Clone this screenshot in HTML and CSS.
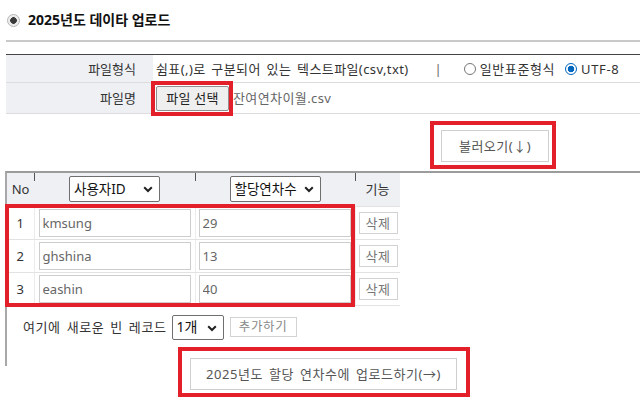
FILE: index.html
```html
<!DOCTYPE html>
<html lang="ko">
<head>
<meta charset="utf-8">
<title>2025년도 데이타 업로드</title>
<link rel="stylesheet" href="styles.css">
</head>
<body>
<div class="page">
  <h1 class="title"><span class="bullet"></span>2025년도 데이타 업로드</h1>
  <div class="rule-light"></div>

  <div class="form">
    <div class="form-row r1">
      <div class="form-label">파일형식</div>
      <div class="form-value">
        <span class="format-text">쉼표(,)로 구분되어 있는 텍스트파일(csv,txt)</span>
        <span class="sep">|</span>
        <span class="radio"></span><span class="radio-label">일반표준형식</span>
        <span class="radio on"></span><span class="radio-label">UTF-8</span>
      </div>
    </div>
    <div class="form-row r2">
      <div class="form-label">파일명</div>
      <div class="form-value">
        <button class="file-btn">파일 선택</button>
        <span class="file-name">잔여연차이월.csv</span>
      </div>
    </div>
  </div>

  <div class="load-row">
    <button class="btn load-btn">불러오기(↓)</button>
  </div>

  <div class="grid-section">
    <table class="grid">
      <colgroup>
        <col class="c-no"><col class="c-id"><col class="c-amt"><col class="c-fn">
      </colgroup>
      <thead>
        <tr>
          <th>No</th>
          <th class="tick">
            <span class="select sel-id">사용자ID<svg class="chev" viewBox="0 0 10 7" width="10" height="7"><path d="M1.2 1.2L5 5 8.8 1.2" fill="none" stroke="#222" stroke-width="2"/></svg></span>
          </th>
          <th class="tick">
            <span class="select sel-amt">할당연차수<svg class="chev" viewBox="0 0 10 7" width="10" height="7"><path d="M1.2 1.2L5 5 8.8 1.2" fill="none" stroke="#222" stroke-width="2"/></svg></span>
          </th>
          <th class="tick">기능</th>
        </tr>
      </thead>
      <tbody>
        <tr>
          <td class="num">1</td>
          <td class="cell-id"><input class="inp" value="kmsung"></td>
          <td class="cell-amt"><input class="inp" value="29"></td>
          <td class="cell-fn"><button class="del-btn">삭제</button></td>
        </tr>
        <tr>
          <td class="num">2</td>
          <td class="cell-id"><input class="inp" value="ghshina"></td>
          <td class="cell-amt"><input class="inp" value="13"></td>
          <td class="cell-fn"><button class="del-btn">삭제</button></td>
        </tr>
        <tr>
          <td class="num">3</td>
          <td class="cell-id"><input class="inp" value="eashin"></td>
          <td class="cell-amt"><input class="inp" value="40"></td>
          <td class="cell-fn"><button class="del-btn">삭제</button></td>
        </tr>
      </tbody>
    </table>

    <div class="add-row">
      <span class="add-text">여기에 새로운 빈 레코드</span>
      <span class="select sel-count">1개<svg class="chev" viewBox="0 0 10 7" width="10" height="7"><path d="M1.2 1.2L5 5 8.8 1.2" fill="none" stroke="#222" stroke-width="2"/></svg></span>
      <button class="add-btn">추가하기</button>
    </div>
  </div>

  <div class="upload-row">
    <button class="btn upload-btn">2025년도 할당 연차수에 업로드하기(→)</button>
  </div>

  <div class="mark mark-file"></div>
  <div class="mark mark-load"></div>
  <div class="mark mark-rows"></div>
  <div class="mark mark-upload"></div>
</div>
</body>
</html>
```

FILE: styles.css
```css
* { box-sizing: border-box; }

html, body {
  margin: 0;
  padding: 0;
  background: #fff;
}

body {
  width: 640px;
  height: 412px;
  overflow: hidden;
  font-family: "Noto Sans", "Noto Sans CJK KR", sans-serif;
  font-size: 13px;
  line-height: 18px;
  color: #333;
}

.page {
  position: relative;
  padding-left: 6px;
}

/* Title */
.title {
  margin: 0;
  height: 40px;
  display: flex;
  align-items: center;
  gap: 8px;
  padding-left: 1px;
  font-size: 14px;
  font-weight: 700;
  color: #111;
}

.bullet {
  width: 13px;
  height: 13px;
  border-radius: 50%;
  border: 1px solid #b5b5b5;
  background: radial-gradient(circle, #3a3a3a 0 3px, #e6e6e6 3.6px, #f6f6f6 6px);
  flex: none;
}

.rule-light {
  height: 2px;
  background: #c9c9c9;
  margin-bottom: 12px;
}

/* File form */
.form {
  border-top: 1px solid #444;
}

.form-row {
  display: grid;
  grid-template-columns: 147px 1fr;
  border-bottom: 1px solid #dcdcdc;
}

.form-row.r1 { height: 28px; }
.form-row.r2 { height: 31px; }

.form-label {
  background: #eef0f3;
  display: flex;
  align-items: center;
  justify-content: flex-end;
  padding-right: 17px;
  color: #333;
}

.form-value {
  display: flex;
  align-items: center;
  padding-left: 3px;
  color: #333;
}

.format-text {
  letter-spacing: 0.4px;
  word-spacing: 2px;
}

.sep {
  margin: 0 22px 0 26px;
  color: #666;
}

.radio {
  width: 12px;
  height: 12px;
  border-radius: 50%;
  border: 1px solid #777;
  background: #fff;
  flex: none;
}

.radio.on {
  border-color: #0067c0;
  background: radial-gradient(circle, #0067c0 0 3px, #fff 3.6px);
}

.radio-label {
  margin-left: 4px;
  margin-right: 10px;
  letter-spacing: 0.6px;
}

.file-btn {
  width: 73px;
  height: 25px;
  padding: 0;
  font: inherit;
  color: #222;
  background: #efefef;
  border: 1px solid #8f8f8f;
  border-radius: 2px;
  letter-spacing: 0.3px;
}

.file-name {
  margin-left: 4px;
  color: #666;
  letter-spacing: 0.4px;
}

/* Load button */
.load-row {
  height: 57px;
  padding-top: 16px;
  padding-left: 435px;
}

.btn {
  font: inherit;
  color: #555;
  background: #fff;
  border: 1px solid #cfcfcf;
  padding: 0;
}

.load-btn {
  width: 108px;
  height: 32px;
  letter-spacing: 0.5px;
}

/* Grid */
.grid-section {
  margin-left: -1px;
  height: 195px;
  border-top: 2px solid #9c9c9c;
  border-left: 2px solid #a8a8a8;
}

.grid {
  width: 393px;
  border-collapse: collapse;
  table-layout: fixed;
}

.c-no { width: 27px; }
.c-id { width: 161px; }
.c-amt { width: 160px; }
.c-fn { width: 45px; }

.grid th {
  position: relative;
  height: 33px;
  padding: 0;
  background: #eef0f3;
  font-weight: 400;
  text-align: center;
  vertical-align: middle;
  color: #333;
}

.grid th.tick::before {
  content: "";
  position: absolute;
  left: 0;
  top: 0;
  width: 1px;
  height: 8px;
  background: #555;
}

.grid td {
  height: 33px;
  padding: 0;
  border-top: 1px solid #e2e2e2;
  border-bottom: 1px solid #e2e2e2;
  vertical-align: middle;
}

.grid td + td {
  border-left: 1px solid #ececec;
}

.grid td.num {
  text-align: center;
}

.cell-id { padding-left: 4px !important; }
.cell-amt { padding-left: 3px !important; }
.cell-fn { padding-left: 3px !important; }

.inp {
  display: block;
  width: 152px;
  height: 28px;
  padding: 0 0 0 3px;
  border: 1px solid #cdcdcd;
  font: inherit;
  color: #666;
  background: #fff;
}

.del-btn {
  width: 39px;
  height: 22px;
  padding: 0;
  font: inherit;
  color: #777;
  background: #fff;
  border: 1px solid #d2d2d2;
  letter-spacing: 0.5px;
}

/* Selects */
.select {
  position: relative;
  display: inline-flex;
  align-items: center;
  height: 26px;
  padding-left: 4px;
  border: 1px solid #6f6f6f;
  border-radius: 2px;
  background: #fff;
  color: #111;
  font-size: 13.5px;
  vertical-align: middle;
}

.sel-id, .sel-amt {
  width: 91px;
}

.chev {
  position: absolute;
  right: 6px;
  top: 9px;
}

.sel-count {
  width: 52px;
  height: 25px;
  padding-left: 4px;
  font-size: 14px;
}

/* Add row */
.add-row {
  display: flex;
  align-items: center;
  padding-left: 16px;
  padding-top: 9px;
  color: #333;
}

.add-text {
  margin-right: 5px;
  letter-spacing: 0.6px;
  word-spacing: 2px;
}

.add-btn {
  margin-left: 6px;
  width: 67px;
  height: 20px;
  padding: 0;
  font: inherit;
  font-size: 12.5px;
  color: #888;
  background: #fff;
  border: 1px solid #d2d2d2;
  letter-spacing: 0.6px;
}

/* Upload */
.upload-row {
  margin-top: -8px;
  padding-left: 184px;
}

.upload-btn {
  width: 267px;
  height: 32px;
  letter-spacing: 0.55px;
  word-spacing: 2px;
}

/* Red annotation marks */
.mark {
  position: absolute;
  border: 4px solid #e3202a;
}

.mark-file { left: 151px; top: 81px; width: 82px; height: 35px; }
.mark-load { left: 430px; top: 121px; width: 126px; height: 48px; }
.mark-rows { left: 5px; top: 204px; width: 350px; height: 103px; }
.mark-upload { left: 178px; top: 347px; width: 292px; height: 50px; }
```
